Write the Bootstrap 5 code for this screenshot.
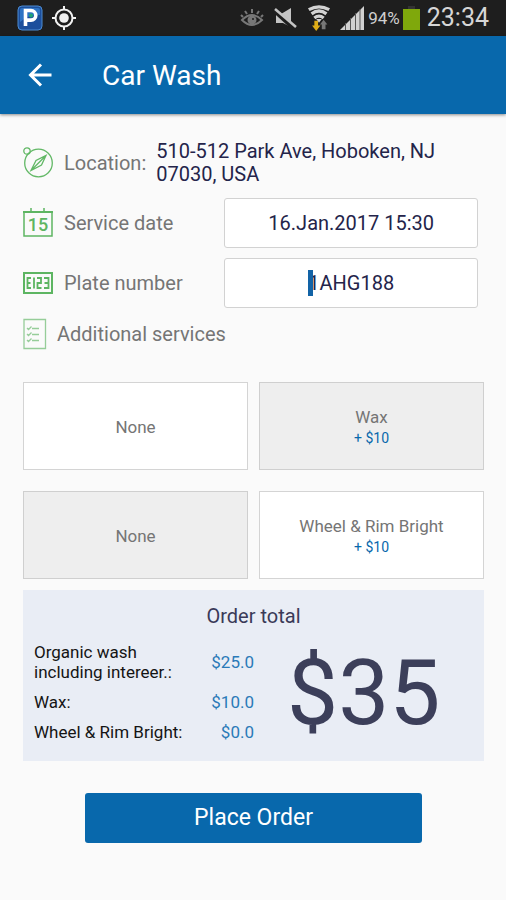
<!DOCTYPE html>
<html lang="en">
<head>
<meta charset="utf-8">
<meta name="viewport" content="width=device-width, initial-scale=1">
<title>Car Wash</title>
<link rel="stylesheet" href="https://cdn.jsdelivr.net/npm/bootstrap@5.3.0/dist/css/bootstrap.min.css">
<style>
  :root { --brand: #0868ac; --ink: #24244a; --soft: #757575; }
  body { font-family: Roboto, "Noto Sans", sans-serif; font-size: 20px; line-height: 24px; background: #fafafa; color: var(--soft); }
  svg { display: block; flex: none; }
  .status-bar { height: 36px; background: #1e1e1e; color: #cfcfcf; padding: 0 17px; }
  .status-icons { gap: 8px; }
  .battery-text { font-size: 17px; margin: 0 3px; }
  .clock { font-size: 25px; margin-left: 7px; color: #d6d6d6; }
  .app-bar { height: 78px; background: var(--brand); padding: 0 24px; box-shadow: 0 1px 3px rgba(0,0,0,.45); }
  .app-bar h1 { font-size: 28px; line-height: 36px; margin-left: 46px; padding-top: 2px; }
  .back-btn { width: 32px; height: 32px; }
  .page-body { padding: 26px 22px 24px 23px; }
  .field-list { gap: 10px; }
  .location-row { margin-bottom: 2px; }
  .icon-box { width: 30px; margin-right: 11px; }
  .location-text { color: var(--ink); line-height: 23px; margin-left: 10px; }
  .field-control { width: 55%; margin-right: 6px; }
  .field-control .form-control { height: 50px; font-size: 20px; color: var(--ink); text-align: center; border: 1px solid #d2d2d2; border-radius: 3px; background: #fff; }
  .text-cursor { width: 5px; height: 26px; background: #1263a6; left: calc(50% - 43px); top: 12px; }
  .tiles { gap: 21px; margin-top: 32px; }
  .tile-row { gap: 11px; }
  .tile { flex: 1 1 0; height: 88px; padding-top: 2px; font-size: 17px; line-height: 21px; background: #fff; border: 1px solid #d4d4d4; cursor: pointer; }
  .btn-check:checked + .tile { background: #eee; border-color: #cfcfcf; }
  .tile .price { font-size: 14px; line-height: 20px; color: var(--brand); }
  .total-box { background: #e9edf5; margin-top: 11px; padding: 14px 11px; }
  .total-box h2 { font-size: 20px; line-height: 24px; color: #3a3a58; margin-bottom: 11px; }
  .lines { width: 220px; font-size: 17px; line-height: 20px; color: #141414; }
  .lines th, .lines td { padding: 3px 0 7px; }
  .lines tr:last-child > * { padding-bottom: 5px; }
  .lines td { color: #2a7ab8; text-align: right; }
  .sum { font-size: 91px; line-height: 92px; color: #3c3f5a; margin-left: 33px; }
  .order-btn { width: 73%; height: 50px; margin-top: 32px; font-size: 23px; line-height: 28px; background: var(--brand); border: 0; border-radius: 3px; color: #fff; }
</style>
</head>
<body>
<div class="status-bar d-flex align-items-center">
  <svg width="26" height="26" viewBox="0 0 26 26" aria-label="Parking">
    <rect x="1" y="1" width="24" height="24" rx="4" fill="#1c4f9c" stroke="#4c8bd0"/>
    <path d="M5 3h16a2 2 0 0 1 2 2v5Q12 9 3 17V5a2 2 0 0 1 2-2z" fill="#2e73c4"/>
    <path d="M8.500 21V5.500h5.500a4.800 4.800 0 0 1 0 9.600H9" fill="none" stroke="#fff" stroke-width="3.600"/>
    <circle cx="14" cy="10.500" r="2" fill="#1fa574"/>
  </svg>
  <svg class="ms-2" width="26" height="26" viewBox="0 0 26 26" fill="none" stroke="#f2f2f2" aria-label="GPS">
    <circle cx="13" cy="13" r="8.500" stroke-width="2"/><circle cx="13" cy="13" r="4.800" fill="#f2f2f2" stroke="none"/>
    <path d="M13 1v4M13 21v4M1 13h4M21 13h4" stroke-width="2"/>
  </svg>
  <div class="ms-auto d-flex align-items-center">
    <div class="status-icons d-flex align-items-center">
      <svg width="24" height="20" viewBox="0 0 24 20" fill="none" stroke="#777" stroke-width="2" aria-label="Smart stay">
        <path d="M2 12Q12 2 22 12Q12 22 2 12z"/><circle cx="12" cy="12" r="3.500" fill="#777"/><path d="M12 1v4M5 3l2 3M19 3l-2 3M1 7l2 2M23 7l-2 2"/><circle cx="13" cy="11" r="1" fill="#1e1e1e" stroke="none"/>
      </svg>
      <svg width="26" height="24" viewBox="0 0 26 24" aria-label="Muted">
        <path d="M4 8h5l10-6v19l-8-4H4z" fill="#c4c4c4"/><path d="M2 4L23 23" stroke="#1e1e1e" stroke-width="5"/><path d="M3 3L24 21" stroke="#c4c4c4" stroke-width="2.500"/>
      </svg>
      <svg width="26" height="28" viewBox="0 0 28 28" fill="none" aria-label="Wi-Fi">
        <path d="M3 5q11-6 22 0M6 9.500q8-6 16 0M9 14q5-4 10 0" stroke="#d2d2d2" stroke-width="3.600"/><path d="M11 15h6l-3 4z" fill="#d2d2d2"/>
        <path d="M9 17h4v5h2.500L11 28l-4.500-6H9z" fill="#e0ae17"/><path d="M17 26v-5h-2l4-5 4 5h-2v5z" fill="#777"/>
      </svg>
      <svg width="25" height="24" viewBox="0 0 25 24" aria-label="Signal">
        <path d="M0 24L24 0v24z" fill="#d0d0d0"/><path d="M5.500 17v7M10.500 12v12M15.500 7v17M20 3v21" stroke="#555" stroke-width="1"/>
      </svg>
    </div>
    <span class="battery-text">94%</span>
    <svg width="17" height="24" viewBox="0 0 17 24" aria-label="Battery"><path d="M5 0h7v3H5z" fill="#333"/><path d="M0 3h17v21H0z" fill="#7fa80c"/></svg>
    <span class="clock">23:34</span>
  </div>
</div>

<header class="app-bar d-flex align-items-center text-white">
  <button type="button" class="back-btn btn p-0 border-0 text-white" aria-label="Back">
    <svg width="32" height="32" viewBox="0 0 32 32" fill="none" stroke="#fff" stroke-width="3"><path d="M27.500 16H7M17 5.500L6.500 16 17 26.500"/></svg>
  </button>
  <h1 class="mb-0 fw-normal">Car Wash</h1>
</header>

<main class="page-body">
  <form>
    <div class="field-list d-flex flex-column">
      <div class="location-row d-flex align-items-center">
        <div class="icon-box">
          <svg width="30" height="32" viewBox="0 0 30 32" fill="none" stroke="#62b866" stroke-width="1.300">
            <circle cx="15.500" cy="16" r="13.800"/><circle cx="4" cy="4" r="3.200"/>
            <path d="M23 8.500L18.500 18 8 23.500 13 13.500zM23 8.500L8 23.500"/>
          </svg>
        </div>
        <span>Location:</span>
        <div class="location-text">510-512 Park Ave, Hoboken, NJ<br>07030, USA</div>
      </div>
      <div class="d-flex align-items-center">
        <div class="icon-box">
          <svg width="30" height="30" viewBox="0 0 30 30" fill="none" stroke="#5db562" stroke-width="1.500">
            <path d="M1 4h28v24H1zM8 0v5M21 0v5"/><path d="M0 4h30" stroke-width="2"/>
            <text x="15" y="23" text-anchor="middle" font-size="18" font-weight="500" fill="#5db562" stroke="none">15</text>
          </svg>
        </div>
        <label for="date">Service date</label>
        <div class="field-control ms-auto"><input id="date" class="form-control" type="text" value="16.Jan.2017 15:30"></div>
      </div>
      <div class="d-flex align-items-center">
        <div class="icon-box">
          <svg width="30" height="22" viewBox="0 0 30 22" fill="none" stroke="#5db562">
            <path d="M1 1h28v20H1z" stroke-width="2"/>
            <path d="M8 6H4.500v10H8M4.500 11H7.500M11 5.500v11M14 6h4v5h-3.500v5H18.500M21 6h4.500v10H21M21.500 11h4" stroke-width="1.800"/>
          </svg>
        </div>
        <label for="plate">Plate number</label>
        <div class="field-control ms-auto position-relative">
          <input id="plate" class="form-control" type="text" value="1AHG188">
          <span class="text-cursor position-absolute"></span>
        </div>
      </div>
      <div class="d-flex align-items-center gap-2">
        <svg width="26" height="32" viewBox="0 0 26 32" fill="none" stroke="#96cd99">
          <path d="M1 1.500h21.500v29H1z" stroke-width="1.300"/><path d="M4 10l1.500 1.500 3-3M4 16l1.500 1.500 3-3M4 22l1.500 1.500 3-3M9 10.500h7M9 16.500h7M9 22.500h7" stroke-width="1.300"/>
        </svg>
        <span>Additional services</span>
      </div>
    </div>

    <div class="tiles d-flex flex-column">
      <div class="tile-row d-flex" role="radiogroup" aria-label="Wax">
        <input class="btn-check" type="radio" name="wax" id="wax-none">
        <label class="tile d-flex flex-column align-items-center justify-content-center" for="wax-none">None</label>
        <input class="btn-check" type="radio" name="wax" id="wax-yes" checked>
        <label class="tile d-flex flex-column align-items-center justify-content-center" for="wax-yes">Wax<span class="price">+ $10</span></label>
      </div>
      <div class="tile-row d-flex" role="radiogroup" aria-label="Wheel and rim">
        <input class="btn-check" type="radio" name="rim" id="rim-none" checked>
        <label class="tile d-flex flex-column align-items-center justify-content-center" for="rim-none">None</label>
        <input class="btn-check" type="radio" name="rim" id="rim-yes">
        <label class="tile d-flex flex-column align-items-center justify-content-center" for="rim-yes">Wheel &amp; Rim Bright<span class="price">+ $10</span></label>
      </div>
    </div>

    <section class="total-box">
      <h2 class="text-center fw-normal">Order total</h2>
      <div class="d-flex align-items-center">
        <table class="lines">
          <tbody>
            <tr><th scope="row" class="fw-normal">Organic wash<br>including intereer.:</th><td>$25.0</td></tr>
            <tr><th scope="row" class="fw-normal">Wax:</th><td>$10.0</td></tr>
            <tr><th scope="row" class="fw-normal">Wheel &amp; Rim Bright:</th><td>$0.0</td></tr>
          </tbody>
        </table>
        <div class="sum">$35</div>
      </div>
    </section>

    <div class="text-center"><button type="button" class="order-btn btn">Place Order</button></div>
  </form>
</main>
<script src="https://cdn.jsdelivr.net/npm/bootstrap@5.3.0/dist/js/bootstrap.bundle.min.js"></script>
</body>
</html>
